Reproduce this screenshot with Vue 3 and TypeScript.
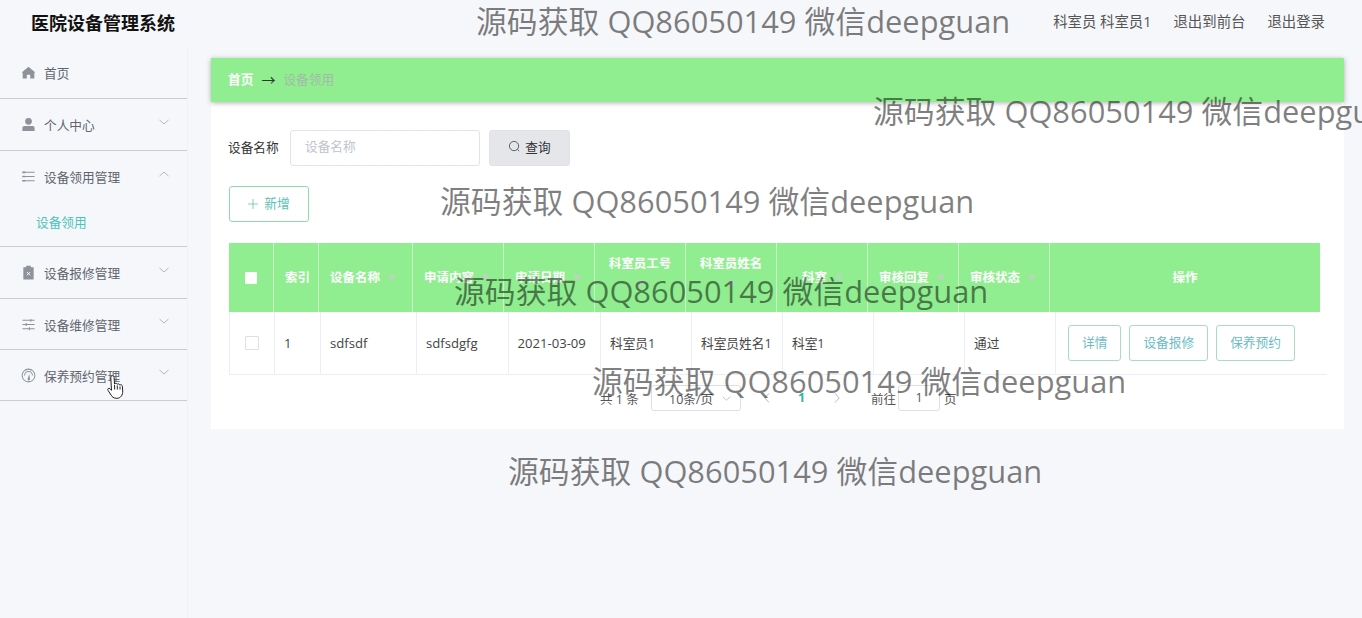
<template>
  <div class="page">
    <header class="topbar">
      <div class="brand">医院设备管理系统</div>
      <div class="top-links">
        <span>科室员 科室员1</span>
        <span>退出到前台</span>
        <span>退出登录</span>
      </div>
    </header>

    <div class="body-wrap">
      <aside class="sidebar">
        <div v-for="menu in menus" :key="menu.title" class="menu-group">
          <div class="menu-title">
            <svg class="menu-icon" viewBox="0 0 16 16" v-html="menu.icon"></svg>
            <span>{{ menu.title }}</span>
            <svg v-if="menu.arrow" class="menu-arrow" viewBox="0 0 10 6">
              <path :d="menu.arrow === 'up' ? 'M.5 5 5 1l4.500 4' : 'M.5 1 5 5l4.500-4'" />
            </svg>
          </div>
          <div v-if="menu.child" class="menu-child">{{ menu.child }}</div>
        </div>
      </aside>

      <main class="main">
        <div class="crumb">
          <span class="crumb-home">首页</span>
          <span class="crumb-sep">→</span>
          <span class="crumb-now">设备领用</span>
        </div>

        <section class="panel">
          <div class="search-row">
            <label>设备名称</label>
            <div class="input">设备名称</div>
            <button class="btn-search">
              <svg viewBox="0 0 14 14"><circle cx="6.500" cy="6.500" r="5" /><path d="m10 10 2 2" /></svg>
              <span>查询</span>
            </button>
          </div>

          <button class="btn-add">
            <svg viewBox="0 0 11 11"><path d="M5.500 0v11M0 5.500h11" /></svg>
            <span>新增</span>
          </button>

          <div class="table">
            <div class="thead">
              <div class="th th-check"><i class="check-white"></i></div>
              <div v-for="col in columns" :key="col.label" class="th" :class="{ center: col.center, wrap: col.raised }">
                <span>{{ col.label }}</span>
                <i v-if="col.sort" class="sort"></i>
              </div>
            </div>
            <div class="tbody">
              <div class="td td-check"><i class="check-empty"></i></div>
              <div v-for="(cell, i) in row" :key="i" class="td" :class="{ latin: i < 4 }">{{ cell }}</div>
              <div class="td td-ops">
                <button v-for="op in ops" :key="op" class="btn-op">{{ op }}</button>
              </div>
            </div>
          </div>

          <div class="pager">
            <span class="total">共 1 条</span>
            <div class="size"><span>10条/页</span><svg viewBox="0 0 10 6"><path d="M.5 1 5 5l4.500-4" /></svg></div>
            <span class="nav first"><svg viewBox="0 0 6 10"><path d="M5 .5.8 5 5 9.500" /></svg></span>
            <span class="nav num">1</span>
            <span class="nav"><svg viewBox="0 0 6 10"><path d="m1 .5 4.200 4.500L1 9.500" /></svg></span>
            <span class="goto">前往</span>
            <div class="jump">1</div>
            <span>页</span>
          </div>
        </section>
      </main>
    </div>

    <div v-for="w in marks" :key="w.y" class="mark" :style="{ left: w.x + 'px', top: w.y + 'px' }">源码获取 QQ86050149 微信deepguan</div>

    <svg class="cursor" viewBox="0 0 18 24">
      <path d="M5.500.700c1 0 1.600.8 1.600 1.800l.4 6.500c.5-.9 2.300-.9 2.700.3.500-.8 2.300-.6 2.500.7.700-.6 2.500-.2 2.700 1.300l.3 4.700c.2 4-2 7.300-6 7.300-3.200 0-4.600-1.500-5.600-3.200L1 15.300c-.8-1.400.9-2.700 2-1.600l1.500 1.700L3.800 2.700C3.700 1.500 4.500.7 5.500.7Z" />
      <path d="M7.600 10v4.500M10.300 10.500v4M13 11.500v3" />
    </svg>
  </div>
</template>

<script setup lang="ts">
interface Menu {
  title: string
  icon: string
  arrow?: 'up' | 'down'
  child?: string
}

const menus: Menu[] = [
  { title: '首页', icon: '<path fill="#8e939b" d="M8 1.800 1 7.800l.8.700V14.500h4.400V10.500h3.600v4h4.400V8.500l.8-.7z"/>' },
  { title: '个人中心', arrow: 'down', icon: '<circle fill="#8e939b" cx="8" cy="4.600" r="3.600"/><path fill="#8e939b" d="M1.500 11.500c0-1.200 1-2 2.200-2h8.600c1.200 0 2.200.8 2.200 2v3.500H1.500z"/>' },
  { title: '设备领用管理', arrow: 'up', child: '设备领用', icon: '<path fill="none" stroke="#8e939b" stroke-width="1.100" d="M1.500 3.500h13M1.500 8h13M1.500 12.500h13"/><path stroke="#8e939b" stroke-width="1.800" d="M1.500 3.500h3M1.500 8h3M1.500 12.500h3"/>' },
  { title: '设备报修管理', arrow: 'down', icon: '<path fill="#8e939b" d="M2.500 2.500h3V.8h5v1.700h3V15.500h-11z"/><path stroke="#fff" stroke-width="1" d="m6.300 7.500 3.400 3.400m0-3.400-3.400 3.400"/>' },
  { title: '设备维修管理', arrow: 'down', icon: '<path fill="none" stroke="#8e939b" stroke-width="1.100" d="M1.500 3.500h13M1.500 8h13M1.500 12.500h13M10.500 2v3M5.500 6.500v3M9 11v3"/>' },
  { title: '保养预约管理', arrow: 'down', icon: '<circle fill="none" stroke="#8e939b" stroke-width="1.100" cx="8" cy="8" r="6.800"/><path fill="none" stroke="#8e939b" stroke-width="1.100" d="M3.800 8a4.200 4.200 0 0 1 8.400 0"/><path fill="#8e939b" d="M7 12 8.800 6.500l.8 5.500a1.300 1.300 0 0 1-2.600 0z"/>' },
]

interface Column {
  label: string
  sort?: boolean
  center?: boolean
  raised?: boolean
}

const columns: Column[] = [
  { label: '索引' },
  { label: '设备名称', sort: true },
  { label: '申请内容', sort: true },
  { label: '申请日期', sort: true },
  { label: '科室员工号', sort: true, raised: true },
  { label: '科室员姓名', sort: true, raised: true },
  { label: '科室', sort: true, center: true },
  { label: '审核回复', sort: true },
  { label: '审核状态', sort: true },
  { label: '操作', center: true },
]

const row = ['1', 'sdfsdf', 'sdfsdgfg', '2021-03-09', '科室员1', '科室员姓名1', '科室1', '', '通过']
const ops = ['详情', '设备报修', '保养预约']

const marks = [
  { x: 476, y: 0 },
  { x: 873, y: 90 },
  { x: 440, y: 180 },
  { x: 454, y: 270 },
  { x: 592, y: 360 },
  { x: 508, y: 450 },
]
</script>

<style>
html, body { background: #f6f7fa; }
</style>

<style scoped>
.page {
  position: relative;
  width: 1362px;
  height: 618px;
  overflow: hidden;
  background: #f6f7fa;
  font-family: "Open Sans", "Noto Sans CJK SC", sans-serif;
  font-size: 12.700px;
  color: #333;
}

.topbar {
  height: 47px;
  display: flex;
  align-items: center;
  justify-content: space-between;
  padding: 0 37px 4px 31px;
  box-sizing: border-box;
}

.brand {
  font-size: 18px;
  font-weight: 700;
  color: #111;
}

.top-links {
  display: flex;
  gap: 22px;
  margin-top: -2px;
  color: #555;
  font-size: 14.400px;
}

.body-wrap {
  display: flex;
  height: 571px;
}

.sidebar {
  width: 188px;
  flex-shrink: 0;
  border-right: 1px solid #eff1f4;
  box-sizing: border-box;
}

.menu-group {
  border-bottom: 1px solid #c8ccd3;
}

.menu-title {
  height: 51px;
  display: flex;
  align-items: center;
  padding: 0 18px 0 21px;
  gap: 7px;
  color: #60656f;
  box-sizing: border-box;
}

.menu-group:nth-child(n+5) .menu-title {
  height: 50px;
}

.menu-icon {
  width: 15px;
  height: 15px;
  flex-shrink: 0;
  margin-right: 1px;
}

.menu-arrow {
  width: 10px;
  height: 6px;
  margin-left: auto;
  margin-top: -6px;
  fill: none;
  stroke: #a9aeb6;
  stroke-width: 0.9;
}

.menu-child {
  height: 44px;
  padding-left: 36px;
  color: #4cc4bc;
  line-height: 40px;
}

.main {
  flex: 1;
  padding: 11px 18px 0 23px;
}

.crumb {
  height: 44px;
  background: #90ee90;
  box-shadow: 0 1px 5px rgba(0, 0, 0, 0.3);
  display: flex;
  align-items: center;
  padding: 0 0 3px 17px;
  box-sizing: border-box;
  gap: 8px;
  position: relative;
}

.crumb-home {
  color: #fff;
  font-weight: 700;
}

.crumb-sep {
  color: #333;
  font-size: 14px;
}

.crumb-now {
  color: #a3baa8;
}

.panel {
  background: #fff;
  height: 327px;
  padding: 28px 17px 0;
  box-sizing: border-box;
}

.search-row {
  display: flex;
  align-items: center;
  gap: 10px;
  height: 36px;
}

.search-row label {
  width: 52px;
  padding-bottom: 3px;
}

.input {
  width: 190px;
  height: 36px;
  border: 1px solid #e2e4ea;
  border-radius: 3px;
  box-sizing: border-box;
  padding-left: 14px;
  line-height: 30px;
  color: #c0c4cc;
}

.btn-search {
  width: 81px;
  height: 36px;
  margin-left: -1px;
  padding: 0 0 3px;
  background: #e4e6ea;
  border: 1px solid #e0e2e6;
  border-radius: 3px;
  font: inherit;
  color: #333;
  display: flex;
  align-items: center;
  justify-content: center;
  gap: 4px;
}

.btn-search svg {
  width: 13px;
  height: 13px;
  fill: none;
  stroke: #555;
  stroke-width: 1;
}

.btn-add {
  display: flex;
  align-items: center;
  justify-content: center;
  gap: 6px;
  width: 80px;
  height: 36px;
  margin: 20px 0 21px 1px;
  padding: 0 0 3px;
  background: #fff;
  border: 1px solid #90d9a8;
  border-radius: 3px;
  font: inherit;
  color: #5cc0b8;
}

.btn-add svg {
  width: 10px;
  height: 10px;
  margin-top: 2px;
  stroke: #7cc9a8;
  stroke-width: 1;
}

.table {
  margin-left: 1px;
}

.thead {
  display: grid;
  grid-template-columns: 45px 45px 94px 91px 91px 91px 91px 91px 91px 91px 270px;
  width: 1091px;
  height: 69px;
  background: #90ee90;
}

.th {
  display: flex;
  align-items: center;
  padding: 0 0 3px 11px;
  border-right: 1px solid #c8f5c8;
  color: #fff;
  font-weight: 700;
  font-size: 12.500px;
  box-sizing: border-box;
}

.th:last-child {
  border-right: 0;
}

.th.center {
  justify-content: center;
  padding-left: 0;
}

.th.wrap {
  flex-direction: column;
  align-items: center;
  padding: 10px 0 0;
}

.th.wrap .sort {
  margin: 8px 0 0;
}

.th-check {
  justify-content: center;
  padding: 0;
}

.check-white {
  width: 12px;
  height: 12px;
  background: #fff;
  border-radius: 1px;
}

.sort {
  width: 6px;
  height: 6px;
  margin: 2px 0 0 9px;
  background: #b5d8b8;
  border-radius: 50%;
  flex-shrink: 0;
}

.tbody {
  display: grid;
  grid-template-columns: 46px 46px 96px 91.500px 92.500px 91px 91px 91px 91px 91px 272px;
  width: 1098px;
  height: 63px;
  border-bottom: 1px solid #ebeef5;
  box-sizing: border-box;
}

.td {
  display: flex;
  align-items: center;
  padding: 0 0 1px 9px;
  border-right: 1px solid #ebeef5;
  box-sizing: border-box;
  color: #444;
}

.td.latin {
  font-size: 13.100px;
}

.td:first-child {
  border-left: 1px solid #ebeef5;
}

.td:last-child {
  border-right: 0;
}

.td-check {
  justify-content: center;
  padding: 0;
}

.check-empty {
  width: 12px;
  height: 12px;
  border: 1px solid #dcdfe6;
  border-radius: 1px;
}

.td-ops {
  padding-left: 12px;
  gap: 8px;
}

.btn-op {
  height: 36px;
  padding: 0 13px 2px;
  background: #fff;
  border: 1px solid #a9dcc0;
  border-radius: 3px;
  font: inherit;
  color: #6cbcc4;
}

.pager {
  display: flex;
  align-items: center;
  height: 36px;
  margin-top: 5px;
  padding-left: 372px;
  color: #555;
  font-size: 12.500px;
}

.total {
  width: 51px;
}

.size {
  width: 90px;
  height: 26px;
  border: 1px solid #dcdfe6;
  border-radius: 3px;
  box-sizing: border-box;
  display: flex;
  align-items: center;
  justify-content: space-between;
  padding: 0 9px 0 17px;
}

.size svg {
  width: 9px;
  height: 5px;
  fill: none;
  stroke: #bbb;
}

.nav {
  width: 35px;
  text-align: center;
  line-height: 0;
}

.nav.first {
  margin-left: 8px;
}

.nav svg {
  width: 6px;
  height: 10px;
  fill: none;
  stroke: #b5b8be;
}

.nav.num {
  color: #2fb5ab;
  font-weight: 700;
}

.goto {
  margin-left: 17px;
}

.jump {
  width: 42px;
  height: 26px;
  margin: 0 4px 0 2px;
  border: 1px solid #dcdfe6;
  border-radius: 3px;
  box-sizing: border-box;
  text-align: center;
  line-height: 24px;
}

.mark {
  position: absolute;
  font-size: 30.850px;
  line-height: 42px;
  color: rgba(0, 0, 0, 0.5);
  white-space: nowrap;
  pointer-events: none;
}

.cursor {
  position: absolute;
  left: 107px;
  top: 375px;
  width: 18px;
  height: 24px;
  fill: #fff;
  stroke: #222;
  stroke-width: 1;
}
</style>
